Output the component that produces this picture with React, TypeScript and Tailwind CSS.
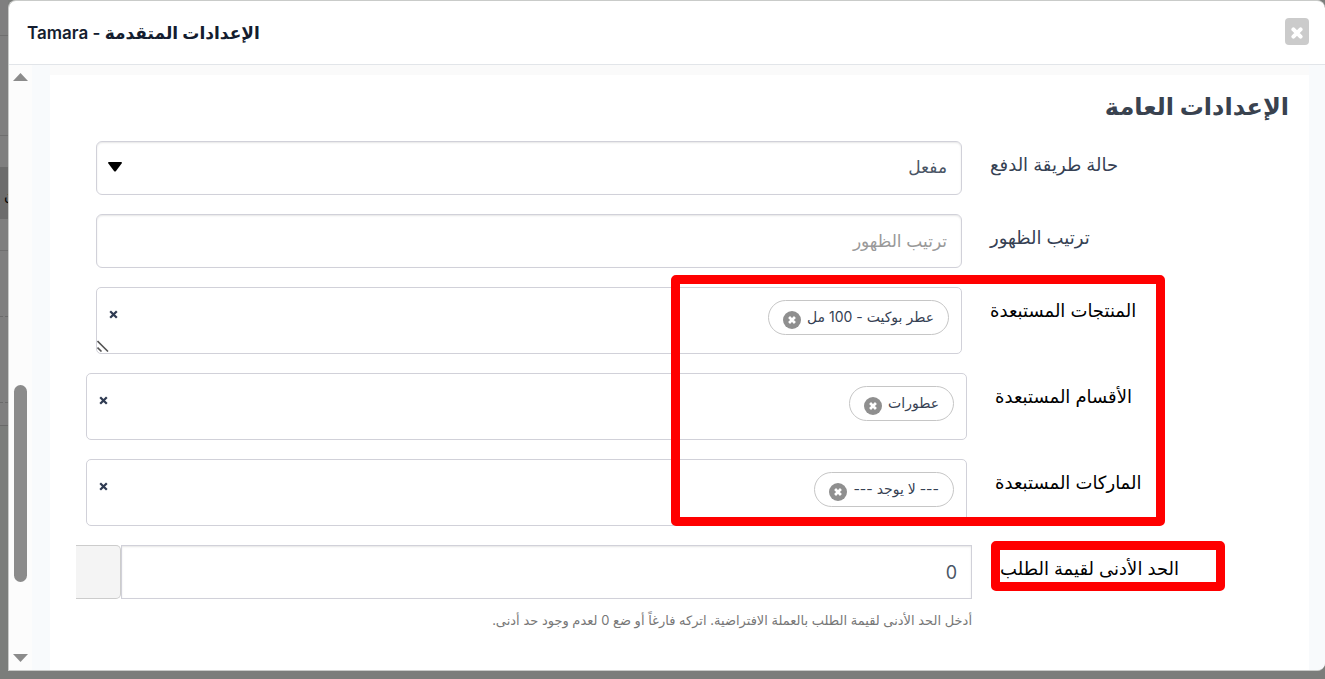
import { useState } from 'react';
import type { ReactNode } from 'react';

const rowInsets = {
  narrow: 'mx-5',
  medium: 'mx-[10px]',
  full: 'mx-0',
};

interface RowProps {
  id: string;
  label: string;
  inset: keyof typeof rowInsets;
  dark?: boolean;
  marker?: ReactNode;
  children: ReactNode;
}

function Row({ id, label, inset, dark, marker, children }: RowProps) {
  return (
    <div className={`relative grid grid-cols-4 ${rowInsets[inset]}`}>
      <label
        htmlFor={id}
        className={`px-[14px] pt-[10px] text-left text-[18px] leading-7 whitespace-nowrap ${
          dark ? 'text-black' : 'text-gray-700'
        }`}
      >
        {label}
      </label>
      <div className="col-span-3 px-[14px]">{children}</div>
      {marker}
    </div>
  );
}

function Cross({ className }: { className: string }) {
  return (
    <svg viewBox="0 0 12 12" className={className} fill="none" stroke="currentColor" aria-hidden="true">
      <path d="M1.6 1.6l8.8 8.8M10.4 1.6l-8.8 8.8" />
    </svg>
  );
}

interface TagFieldProps {
  id: string;
  initial: string;
  resizable?: boolean;
}

function TagField({ id, initial, resizable }: TagFieldProps) {
  const [tags, setTags] = useState([initial]);

  return (
    <div className="relative flex h-[67px] items-start justify-between rounded-[5px] border border-[#d1d1d9] bg-white pt-3 pr-3 pl-3">
      <ul className="flex gap-2">
        {tags.map((tag) => (
          <li
            key={tag}
            className="flex h-[35px] items-center gap-[6px] rounded-full border border-[#c6c6c6] pr-[14px] pl-[14px] text-[14px] text-gray-700"
          >
            <span className="pb-[2px] whitespace-nowrap">{tag}</span>
            <button
              type="button"
              aria-label={`إزالة ${tag}`}
              onClick={() => setTags(tags.filter((t) => t !== tag))}
              className="mt-1 flex size-[18px] items-center justify-center rounded-full bg-[#8f8f8f] text-white"
            >
              <Cross className="size-2 stroke-4" />
            </button>
          </li>
        ))}
      </ul>
      <button
        id={id}
        type="button"
        aria-label="مسح الكل"
        onClick={() => setTags([])}
        className="mt-[10px] flex text-[#2f3b52]"
      >
        <Cross className="size-[9px] stroke-3" />
      </button>
      {resizable && (
        <svg viewBox="0 0 12 12" className="absolute bottom-px left-0 size-3" stroke="#555" strokeWidth="1.6" aria-hidden="true">
          <path d="M0.5 1l10.5 10.5M0.5 7.5l4 4" />
        </svg>
      )}
    </div>
  );
}

function Scrollbar() {
  return (
    <div className="flex w-[23px] shrink-0 flex-col items-center bg-[#fcfcfc] py-2" aria-hidden="true">
      <svg viewBox="0 0 15 8" className="h-2 w-[15px] shrink-0" fill="#8b8b8b">
        <path d="M7.5 0L15 8H0z" />
      </svg>
      <div className="flex-[304]" />
      <div className="w-[13px] flex-[197] rounded-full bg-[#8b8b8b]" />
      <div className="flex-[72]" />
      <svg viewBox="0 0 15 8" className="h-2 w-[15px] shrink-0" fill="#8b8b8b">
        <path d="M7.5 8L15 0H0z" />
      </svg>
    </div>
  );
}

// sliver of the page that stays visible next to the modal
function Backdrop() {
  return (
    <div className="flex w-2 shrink-0 flex-col overflow-hidden bg-[#7f7f7f]" aria-hidden="true">
      <div className="h-9 border-b border-[#6f6f6f]" />
      <div className="h-[100px] border-b border-[#6f6f6f]" />
      <div className="h-[31px]" />
      <div className="flex h-[52px] items-center bg-[#6c6c6c] pt-1 pl-1 text-[14px] text-black">ن</div>
      <div className="h-8 border-b border-[#6f6f6f]" />
      <div className="h-[66px] border-b border-dashed border-[#6a6a6a]" />
      <div className="h-[86px] border-b border-dashed border-[#6a6a6a]" />
      <div className="h-[23px] border-b border-[#6a6a6a]" />
      <div className="flex-1 bg-[#7b7d7b]" />
    </div>
  );
}

export default function App() {
  const [order, setOrder] = useState('');
  const [minimum, setMinimum] = useState('0');

  return (
    <div className="flex h-screen overflow-hidden bg-[#7b7d7b] font-['Inter','Noto_Sans','DejaVu_Sans',sans-serif]">
      <Backdrop />
      <div
        dir="rtl"
        role="dialog"
        aria-labelledby="dialog-title"
        className="mb-2 flex min-w-0 flex-1 flex-col overflow-hidden rounded-t-lg rounded-br-lg border-y border-l border-[#c9cbc9] bg-white"
      >
        <header className="flex h-16 shrink-0 items-center justify-between border-b border-[#e2e5e9] pr-4 pl-[18px]">
          <button
            type="button"
            aria-label="إغلاق"
            className="mb-[2px] flex h-[27px] w-6 items-center justify-center rounded bg-[#cbcbcb] text-white"
          >
            <svg viewBox="0 0 12 12" className="mt-[3px] size-3" stroke="currentColor" strokeWidth="4" strokeLinecap="round" aria-hidden="true">
              <path d="M2.4 2.4l7.2 7.2M9.6 2.4l-7.2 7.2" />
            </svg>
          </button>
          <h1 id="dialog-title" className="text-[17px] leading-7 font-semibold text-[#141d2f]">
            الإعدادات المتقدمة - Tamara
          </h1>
        </header>

        <div className="flex min-h-0 flex-1">
          <div className="flex min-w-0 flex-1 bg-[#f8fafc] pr-4 pl-[18px]">
            <div className="flex min-w-0 flex-1 flex-col overflow-hidden border-t-10 border-[#fafafa] bg-white">
              <h2 className="mr-5 pt-3 text-[24px] leading-10 font-bold text-[#39424f]">الإعدادات العامة</h2>

              <form className="mt-[14px] mr-[15px] ml-3 flex flex-col gap-[19px]" onSubmit={(e) => e.preventDefault()}>
                <Row id="status" label="حالة طريقة الدفع" inset="narrow">
                  <div className="relative">
                    <select
                      id="status"
                      defaultValue="enabled"
                      className="block h-[54px] w-full appearance-none rounded-md border border-[#d1d1d9] bg-white pr-[14px] pl-10 text-[17px] text-gray-600 shadow-[inset_0_1px_2px_#0000001a]"
                    >
                      <option value="enabled">مفعل</option>
                      <option value="disabled">معطل</option>
                    </select>
                    <svg viewBox="0 0 14 10" className="pointer-events-none absolute top-[21px] left-3 h-[10px] w-[14px]" aria-hidden="true">
                      <path d="M1 0h12q1 0 1 1L8 9q-1 1-2 0L0 1q0-1 1-1z" />
                    </svg>
                  </div>
                </Row>

                <Row id="order" label="ترتيب الظهور" inset="narrow">
                  <input
                    id="order"
                    type="text"
                    value={order}
                    onChange={(e) => setOrder(e.target.value)}
                    placeholder="ترتيب الظهور"
                    className="block h-[54px] w-full rounded-md border border-[#d1d1d9] bg-white px-[14px] text-[17px] text-gray-600 shadow-[inset_0_1px_2px_#0000001a] placeholder:text-[#999]"
                  />
                </Row>

                <div className="relative flex flex-col gap-[19px]">
                  <Row id="products" label="المنتجات المستبعدة" inset="narrow" dark>
                    <TagField id="products" initial="عطر بوكيت - 100 مل" resizable />
                  </Row>
                  <Row id="categories" label="الأقسام المستبعدة" inset="medium" dark>
                    <TagField id="categories" initial="عطورات" />
                  </Row>
                  <Row id="brands" label="الماركات المستبعدة" inset="medium" dark>
                    <TagField id="brands" initial="--- لا يوجد ---" />
                  </Row>
                  <div className="pointer-events-none absolute -top-3 right-[129px] bottom-0 w-[494px] rounded-[5px] border-9 border-[#ff0000]" />
                </div>

                <Row
                  id="minimum"
                  label="الحد الأدنى لقيمة الطلب"
                  inset="full"
                  dark
                  marker={
                    <div className="pointer-events-none absolute -top-1 right-[69px] h-[50px] w-[234px] rounded-[5px] border-9 border-[#ff0000]" />
                  }
                >
                  <div className="flex h-[54px]">
                    <input
                      id="minimum"
                      type="text"
                      inputMode="decimal"
                      value={minimum}
                      onChange={(e) => setMinimum(e.target.value)}
                      className="min-w-0 flex-1 border border-[#d1d1d9] bg-white px-[14px] text-[18px] text-gray-600 shadow-[inset_0_1px_2px_#0000001a]"
                    />
                    <span className="w-[45px] rounded-r-[5px] border-y border-r border-[#ccc] bg-[#f4f4f4]" />
                  </div>
                  <p className="mt-[11px] text-[13px] leading-5 text-[#777]">
                    أدخل الحد الأدنى لقيمة الطلب بالعملة الافتراضية. اتركه فارغاً أو ضع 0 لعدم وجود حد أدنى.
                  </p>
                </Row>
              </form>
            </div>
          </div>
          <Scrollbar />
        </div>
      </div>
    </div>
  );
}
